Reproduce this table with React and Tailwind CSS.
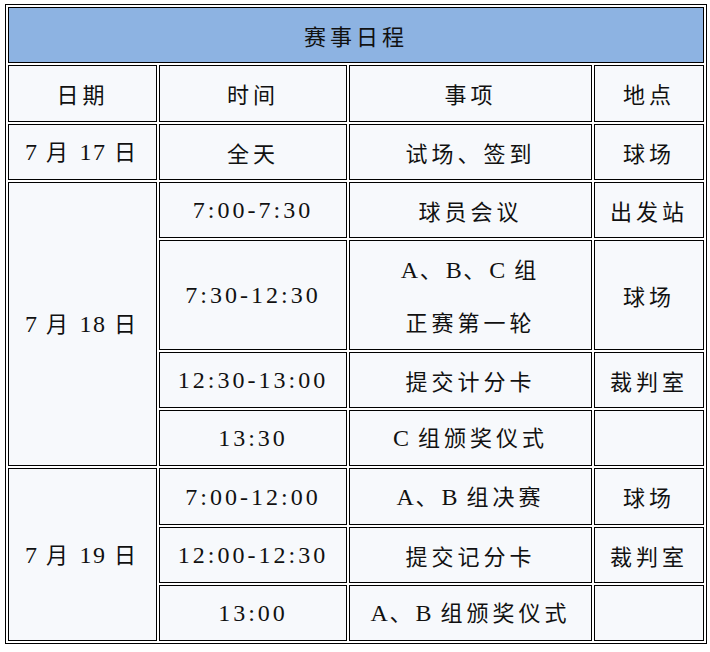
import React from "react";

const cell = "border border-black bg-[#f7f9fc] text-center align-middle p-0";

// latin/digit runs are set a touch larger, like the half-width glyphs of the original
const L = ({ children, wide }) => (
  <span
    className={wide ? "text-[24px] tracking-[3px]" : "text-[24px] tracking-[1.5px]"}
    style={{ fontFamily: '"Liberation Serif", serif' }}
  >
    {children}
  </span>
);

const Row = ({ children, h = "h-[56px]" }) => <tr className={h}>{children}</tr>;

const App = () => {
  return (
    <div className="w-[710px] h-[652px] bg-white pt-[4px] pl-[5px]">
      <table
        className="border-separate border-spacing-[2px] border border-black text-[22px] tracking-[4px] text-[#111] table-fixed"
        style={{ fontFamily: '"Noto Sans CJK SC", sans-serif', width: 702 }}
      >
        <colgroup>
          <col style={{ width: 149 }} />
          <col style={{ width: 188 }} />
          <col style={{ width: 243 }} />
          <col style={{ width: 110 }} />
        </colgroup>
        <tbody>
          <Row>
            <td colSpan={4} className="border border-black bg-[#8db3e2] text-center align-middle p-0">
              赛事日程
            </td>
          </Row>
          <Row h="h-[57px]">
            <td className={cell}>日期</td>
            <td className={cell}>时间</td>
            <td className={cell}>事项</td>
            <td className={cell}>地点</td>
          </Row>
          <Row>
            <td className={cell}><L>7 </L>月<L> 17 </L>日</td>
            <td className={cell}>全天</td>
            <td className={cell}>试场、签到</td>
            <td className={cell}>球场</td>
          </Row>
          <Row>
            <td rowSpan={4} className={cell}><L>7 </L>月<L> 18 </L>日</td>
            <td className={cell}><L wide>7:00-7:30</L></td>
            <td className={cell}>球员会议</td>
            <td className={cell}>出发站</td>
          </Row>
          <Row h="h-[110px]">
            <td className={cell}><L wide>7:30-12:30</L></td>
            <td className={cell}>
              <div className="leading-[51px]"><L>A</L>、<L>B</L>、<L>C </L>组</div>
              <div className="leading-[51px]">正赛第一轮</div>
            </td>
            <td className={cell}>球场</td>
          </Row>
          <Row>
            <td className={cell}><L wide>12:30-13:00</L></td>
            <td className={cell}>提交计分卡</td>
            <td className={cell}>裁判室</td>
          </Row>
          <Row>
            <td className={cell}><L wide>13:30</L></td>
            <td className={cell}><L>C </L>组颁奖仪式</td>
            <td className={cell}></td>
          </Row>
          <Row h="h-[57px]">
            <td rowSpan={3} className={cell}><L>7 </L>月<L> 19 </L>日</td>
            <td className={cell}><L wide>7:00-12:00</L></td>
            <td className={cell}><L>A</L>、<L>B </L>组决赛</td>
            <td className={cell}>球场</td>
          </Row>
          <Row>
            <td className={cell}><L wide>12:00-12:30</L></td>
            <td className={cell}>提交记分卡</td>
            <td className={cell}>裁判室</td>
          </Row>
          <Row>
            <td className={cell}><L wide>13:00</L></td>
            <td className={cell}><L>A</L>、<L>B </L>组颁奖仪式</td>
            <td className={cell}></td>
          </Row>
        </tbody>
      </table>
    </div>
  );
};

export default App;
